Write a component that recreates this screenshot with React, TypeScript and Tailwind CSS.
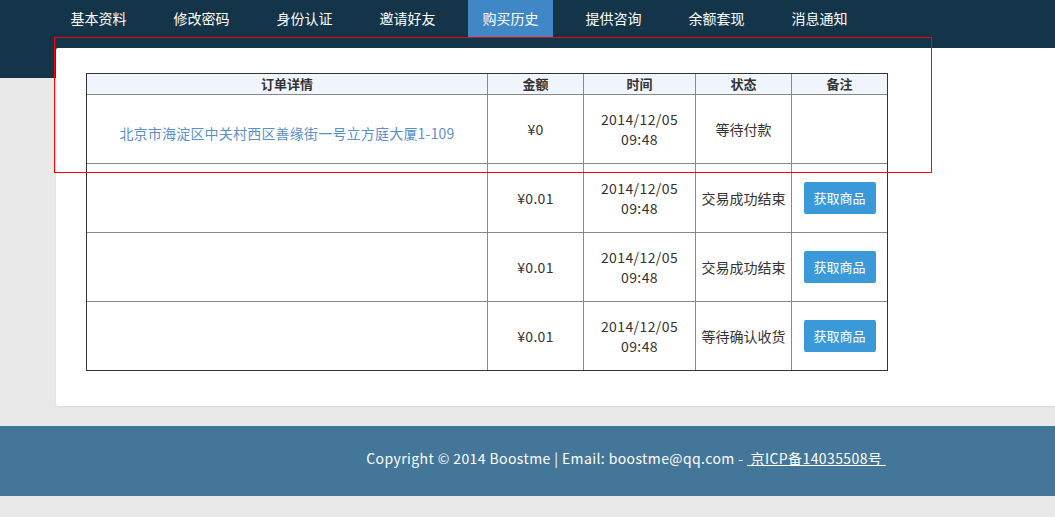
import React from 'react';

const font = { fontFamily: '"Noto Sans CJK SC", "Noto Sans", sans-serif' };

const navItems = ['基本资料', '修改密码', '身份认证', '邀请好友', '购买历史', '提供咨询', '余额套现', '消息通知'];

interface Order {
  detail?: string;
  amount: string;
  date: string;
  time: string;
  status: string;
  canFetch: boolean;
}

const orders: Order[] = [
  { detail: '北京市海淀区中关村西区善缘街一号立方庭大厦1-109', amount: '¥0', date: '2014/12/05', time: '09:48', status: '等待付款', canFetch: false },
  { amount: '¥0.01', date: '2014/12/05', time: '09:48', status: '交易成功结束', canFetch: true },
  { amount: '¥0.01', date: '2014/12/05', time: '09:48', status: '交易成功结束', canFetch: true },
  { amount: '¥0.01', date: '2014/12/05', time: '09:48', status: '等待确认收货', canFetch: true },
];

const headCell = 'bg-[#f0f5fd] border-b border-r border-[#888] text-[13px] font-bold text-[#333] text-center leading-[20px] p-0';
const bodyCell = 'border-r border-[#888] text-[14px] text-[#333] text-center align-middle p-0';

const App = () => {
  return (
    <div className="relative w-[1055px] min-h-[517px] bg-[#e9e9e9] overflow-hidden" style={font}>
      {/* header band */}
      <div className="h-[78px] bg-[#133449]">
        <ul className="flex h-[37px] pl-[56px] gap-[18px]">
          {navItems.map((item) => (
            <li
              key={item}
              className={`w-[85px] flex items-center justify-center text-[14px] text-white ${item === '购买历史' ? 'bg-[#3f88c5]' : ''}`}
            >
              {item}
            </li>
          ))}
        </ul>
      </div>

      {/* card */}
      <div className="relative -mt-[30px] ml-[56px] w-[1140px] bg-white rounded-[2px] shadow-[0_1px_2px_rgba(0,0,0,0.08)] pt-[25px] pb-[35px] pl-[30px]">
        <table className="table-fixed border-separate border-spacing-0 border border-[#333] w-[802px]">
          <colgroup>
            <col className="w-[401px]" />
            <col className="w-[96px]" />
            <col className="w-[112px]" />
            <col className="w-[96px]" />
            <col className="w-[95px]" />
          </colgroup>
          <thead>
            <tr className="h-[21px]">
              <th className={headCell}>订单详情</th>
              <th className={headCell}>金额</th>
              <th className={headCell}>时间</th>
              <th className={headCell}>状态</th>
              <th className={`${headCell} border-r-0`}>备注</th>
            </tr>
          </thead>
          <tbody>
            {orders.map((o, i) => {
              const last = i === orders.length - 1;
              const rowBorder = last ? '' : 'border-b';
              return (
                <tr key={i} className={last ? 'h-[68px]' : 'h-[69px]'}>
                  <td className={`${bodyCell} ${rowBorder}`}>
                    {o.detail && <a className="block pt-[8px] text-[#5a8fcb] tracking-[0.2px]">{o.detail}</a>}
                  </td>
                  <td className={`${bodyCell} ${rowBorder} tracking-[0.3px]`}>{o.amount}</td>
                  <td className={`${bodyCell} ${rowBorder} leading-[20px] tracking-[0.4px]`}>
                    {o.date}
                    <br />
                    {o.time}
                  </td>
                  <td className={`${bodyCell} ${rowBorder} text-[13px]`}>{o.status}</td>
                  <td className={`${bodyCell} ${rowBorder} border-r-0`}>
                    {o.canFetch && (
                      <button className="w-[72px] h-[32px] rounded-[2px] bg-[#3a9ad9] text-white text-[13px]">获取商品</button>
                    )}
                  </td>
                </tr>
              );
            })}
          </tbody>
        </table>
      </div>

      {/* footer */}
      <div className="mt-[20px] h-[70px] bg-[#44769a]">
        <div className="ml-[56px] w-[1140px] h-full flex items-center justify-center pb-[6px] text-[14px] text-white tracking-[0.4px]">
          <span>
            Copyright © 2014 Boostme | Email: boostme@qq.com -{' '}
            <a className="underline">&nbsp;京ICP备14035508号&nbsp;</a>
          </span>
        </div>
      </div>

      {/* red selection outline */}
      <div className="absolute left-[54px] top-[37px] w-[878px] h-[136px] border border-[#ff0000] pointer-events-none" />
    </div>
  );
};

export default App;
